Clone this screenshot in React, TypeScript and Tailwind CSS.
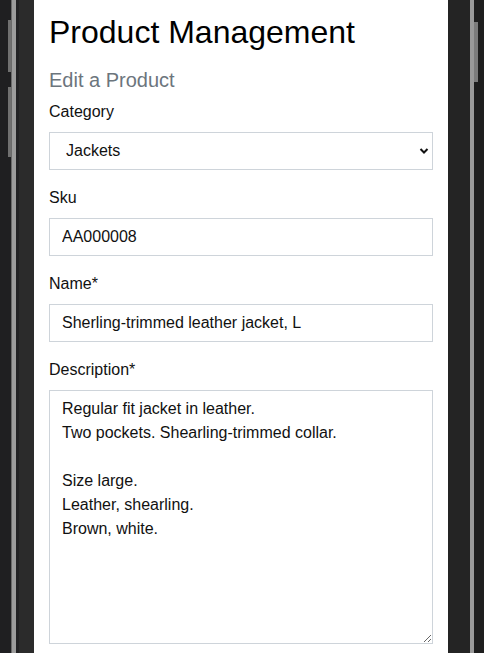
import React from "react";

const description = `Regular fit jacket in leather.
Two pockets. Shearling-trimmed collar.

Size large.
Leather, shearling.
Brown, white.`;

function Field({ label, children }: { label: string; children: React.ReactNode }) {
  return (
    <div className="mb-[16px]">
      <label className="mb-[8px] block text-[16px] leading-[24px] text-[#111]">{label}</label>
      {children}
    </div>
  );
}

function LeftBezel() {
  return (
    <div className="flex h-full w-[34px] shrink-0">
      <div className="w-[8px] bg-[#1f1f21]" />
      <div className="flex w-[3px] flex-col bg-[#1f1f21] pt-[20px]">
        <div className="h-[52px] bg-[#707070]" />
        <div className="mt-[15px] h-[70px] bg-[#707070]" />
      </div>
      <div className="w-[5px] border-l border-[#6a6a6a] bg-[#9c9c9c]" />
      <div className="w-[3px] bg-[#222224]" />
      <div className="flex-1 bg-[#2b2b2b]" />
    </div>
  );
}

function RightBezel() {
  return (
    <div className="flex h-full w-[36px] shrink-0">
      <div className="w-[22px] bg-[#242424]" />
      <div className="w-[4px] bg-[#9a9a9a]" />
      <div className="flex w-[4px] flex-col bg-[#1e1e1e] pt-[22px]">
        <div className="h-[60px] bg-[#7c7c7c]" />
      </div>
      <div className="w-[6px] bg-[#1e1e1e]" />
    </div>
  );
}

export default function App() {
  return (
    <div className="flex h-[653px] w-[484px] overflow-hidden bg-[#1f1f21] font-['Liberation_Sans',Arial,sans-serif]">
      <LeftBezel />
      <main className="w-[414px] shrink-0 bg-white px-[15px] pt-[13px]">
        <h1 className="mb-[17px] text-[32px] leading-[38px] text-black">Product Management</h1>
        <h5 className="mb-[8px] text-[20px] leading-[24px] text-[#6c757d]">Edit a Product</h5>

        <Field label="Category">
          <div className="relative">
            <select
              defaultValue="jackets"
              className="block h-[38px] w-full appearance-none border border-[#ced4da] bg-white pl-[16px] text-[16px] text-[#111] outline-none"
            >
              <option value="jackets">Jackets</option>
              <option value="coats">Coats</option>
            </select>
            <svg
              className="pointer-events-none absolute top-1/2 right-[4px] -translate-y-1/2"
              width="10"
              height="7"
              viewBox="0 0 10 7"
            >
              <path d="M1.5 1.5 L5 5 L8.5 1.5" fill="none" stroke="#111" strokeWidth="2" />
            </svg>
          </div>
        </Field>

        <Field label="Sku">
          <input
            defaultValue="AA000008"
            className="block h-[38px] w-full border border-[#ced4da] px-[12px] text-[16px] text-[#111] outline-none"
          />
        </Field>

        <Field label="Name*">
          <input
            defaultValue="Sherling-trimmed leather jacket, L"
            className="block h-[38px] w-full border border-[#ced4da] px-[12px] text-[16px] text-[#111] outline-none"
          />
        </Field>

        <Field label="Description*">
          <textarea
            defaultValue={description}
            className="block h-[254px] w-full border border-[#ced4da] px-[12px] py-[6px] text-[16px] leading-[24px] text-[#111] outline-none"
          />
        </Field>
      </main>
      <RightBezel />
    </div>
  );
}
